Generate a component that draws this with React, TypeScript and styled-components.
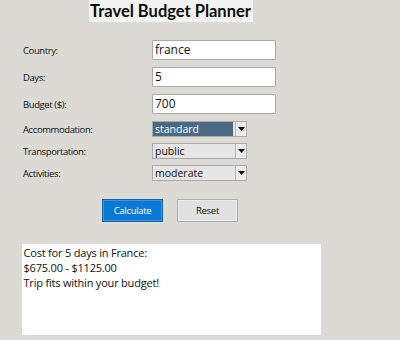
import styled, { createGlobalStyle } from "styled-components";

const GlobalStyle = createGlobalStyle`
  html, body {
    margin: 0;
    padding: 0;
    background: #dcdad5;
  }
  body {
    font-family: "Open Sans", "Noto Sans", sans-serif;
    color: #111;
  }
`;

interface IField {
  label: string;
  value: string;
  kind: "entry" | "combo";
  selected?: boolean;
}

const fields: IField[] = [
  { label: "Country:", value: "france", kind: "entry" },
  { label: "Days:", value: "5", kind: "entry" },
  { label: "Budget ($):", value: "700", kind: "entry" },
  { label: "Accommodation:", value: "standard", kind: "combo", selected: true },
  { label: "Transportation:", value: "public", kind: "combo" },
  { label: "Activities:", value: "moderate", kind: "combo" },
];

const resultLines = [
  "Cost for 5 days in France:",
  "$675.00 - $1125.00",
  "Trip fits within your budget!",
];

function Arrow() {
  return (
    <svg width="7" height="4" viewBox="0 0 7 4">
      <polygon points="0,0 7,0 3.5,4" fill="#111" />
    </svg>
  );
}

export default function App() {
  return (
    <>
      <GlobalStyle />
      <Main>
        <Title>Travel Budget Planner</Title>
        <Form>
          {fields.map((f) => (
            <Row key={f.label} $kind={f.kind}>
              <Label>{f.label}</Label>
              {f.kind === "entry" ? (
                <Entry>{f.value}</Entry>
              ) : (
                <Combo>
                  <ComboValue $selected={f.selected}>{f.value}</ComboValue>
                  <ComboButton>
                    <Arrow />
                  </ComboButton>
                </Combo>
              )}
            </Row>
          ))}
        </Form>
        <Buttons>
          <Button $primary>Calculate</Button>
          <Button>Reset</Button>
        </Buttons>
        <Output>
          {resultLines.map((l) => (
            <p key={l}>{l}</p>
          ))}
        </Output>
      </Main>
    </>
  );
}

const Main = styled.div`
  width: 341px;
  display: flex;
  flex-direction: column;
  align-items: center;
`;

const Title = styled.h1`
  margin: 0;
  width: 164px;
  height: 22px;
  background: #f2f2f2;
  font-family: Lato, "Open Sans", sans-serif;
  font-size: 16.5px;
  font-weight: 700;
  line-height: 22px;
  text-align: center;
  white-space: nowrap;
  color: #0d0d0d;
`;

const Form = styled.div`
  align-self: stretch;
  margin: 18px 0 0 23px;
  display: flex;
  flex-direction: column;
  gap: 7px;
`;

const Row = styled.div<{ $kind: "entry" | "combo" }>`
  display: grid;
  grid-template-columns: 129px auto;
  align-items: center;
  height: ${(p) => (p.$kind === "entry" ? "20px" : "15px")};
`;

const Label = styled.span`
  font-size: 9.5px;
  letter-spacing: -0.4px;
  color: #111;
`;

const Entry = styled.div`
  box-sizing: border-box;
  width: 124px;
  height: 20px;
  background: #fff;
  border: 1px solid #a9a9a9;
  border-radius: 1px;
  padding: 0 2px;
  font-size: 12px;
  line-height: 18px;
  color: #111;
`;

const Combo = styled.div`
  box-sizing: border-box;
  width: 95px;
  height: 16px;
  display: flex;
  border: 1px solid #a9a9a9;
  background: #e6e6e6;
`;

const ComboValue = styled.div<{ $selected?: boolean }>`
  flex: 1;
  padding: 0 2px;
  font-size: 10.5px;
  line-height: 14px;
  background: ${(p) => (p.$selected ? "#4a6984" : "transparent")};
  color: ${(p) => (p.$selected ? "#fff" : "#111")};
  margin: ${(p) => (p.$selected ? "0 2px 0 0" : "0")};
`;

const ComboButton = styled.div`
  width: 10px;
  display: flex;
  align-items: center;
  justify-content: center;
  border-left: 1px solid #b5b5b5;
  background: #ececec;
`;

const Buttons = styled.div`
  display: flex;
  gap: 14px;
  margin-top: 19px;
  padding-right: 1px;
`;

const Button = styled.button<{ $primary?: boolean }>`
  box-sizing: border-box;
  width: 61px;
  height: 23px;
  padding: 0;
  font-family: "Open Sans", "Noto Sans", sans-serif;
  font-size: 9.5px;
  letter-spacing: -0.3px;
  border: 1px solid ${(p) => (p.$primary ? "#1a5fa0" : "#adadad")};
  background: ${(p) => (p.$primary ? "#0a78d7" : "#e1e1e1")};
  color: ${(p) => (p.$primary ? "#fff" : "#111")};
  box-shadow: inset 0 0 0 1px ${(p) => (p.$primary ? "#3f93e0" : "#ececec")};
`;

const Output = styled.div`
  box-sizing: border-box;
  width: 299px;
  height: 91px;
  margin-top: 22px;
  margin-left: 1px;
  background: #fff;
  padding: 1px 2px;
  font-size: 11px;
  letter-spacing: -0.2px;
  line-height: 15px;
  color: #111;

  & > p {
    margin: 0;
  }
`;
